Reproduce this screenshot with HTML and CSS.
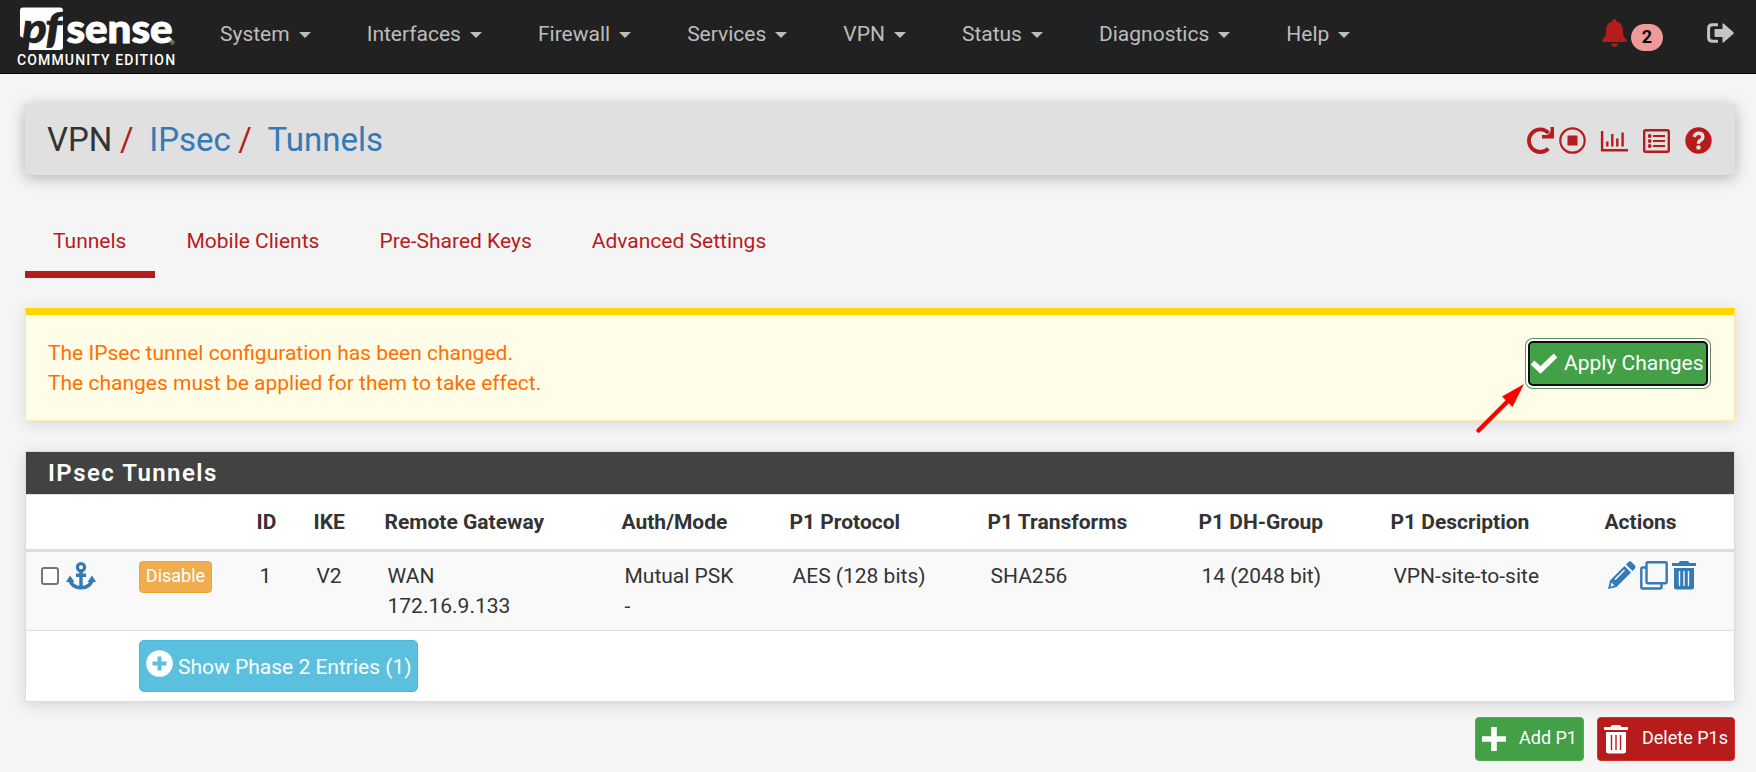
FILE: index.html
```html
<!DOCTYPE html>
<html lang="en">
<head>
<meta charset="utf-8">
<title>VPN: IPsec: Tunnels</title>
<link rel="stylesheet" href="styles.css">
</head>
<body>
<nav class="navbar">
  <a class="brand">
    <svg class="logo" width="160" height="46" viewBox="0 0 160 46">
      <path d="M8 2.500H45Q48 2.500 48 5.500V42Q48 45 45 45H10L13 36 5 31V5.500Q5 2.500 8 2.500Z" fill="#fff"/>
      <text x="7" y="38" class="logo-pf" textLength="25" lengthAdjust="spacingAndGlyphs">p</text>
      <text x="30" y="38" class="logo-pf" textLength="17" lengthAdjust="spacingAndGlyphs">f</text>
      <text x="51.500" y="37.500" class="logo-sense" textLength="106" lengthAdjust="spacingAndGlyphs">sense</text>
      <text x="155" y="40" class="logo-reg">®</text>
    </svg>
    <span class="edition">COMMUNITY EDITION</span>
  </a>
  <ul class="menu">
    <li>System<i class="caret"></i></li>
    <li>Interfaces<i class="caret"></i></li>
    <li>Firewall<i class="caret"></i></li>
    <li>Services<i class="caret"></i></li>
    <li>VPN<i class="caret"></i></li>
    <li>Status<i class="caret"></i></li>
    <li>Diagnostics<i class="caret"></i></li>
    <li>Help<i class="caret"></i></li>
  </ul>
  <div class="nav-right">
    <svg class="bell" width="25" height="28" viewBox="0 0 25 28"><path d="M12.500 0C11.300 0 10.600.8 10.600 1.900V2.600C6.600 3.500 4.200 6.600 4.200 10.500 4.200 15.500 3.200 18 .8 20.200.1 21 0 21.500.1 22.100.3 22.700.9 23 1.500 23H23.500C24.100 23 24.700 22.700 24.900 22.100 25 21.500 24.900 21 24.200 20.200 21.800 18 20.800 15.500 20.800 10.500 20.800 6.600 18.400 3.500 14.400 2.600V1.900C14.400.8 13.700 0 12.500 0ZM9 24.500C9.200 26.600 10.600 28 12.500 28S15.800 26.600 16 24.500Z" fill="#b71c1c"/></svg>
    <span class="badge">2</span>
    <svg class="signout" width="27" height="20" viewBox="0 0 27 20"><path d="M11 1.700H5.500Q1.600 1.700 1.600 5.500V14.500Q1.600 18.300 5.500 18.300H11" fill="none" stroke="#c4c4c4" stroke-width="3"/><path d="M15.500 1Q15.500 0 16.500.4L26.500 9.300Q27 10 26.500 10.700L16.500 19.600Q15.500 20 15.500 19V14H8.500Q7.500 14 7.500 13V7Q7.500 6 8.500 6H15.500Z" fill="#c4c4c4"/></svg>
  </div>
</nav>

<main class="container">
  <header class="page-header">
    <h1 class="crumbs"><span>VPN</span><b>/</b><a>IPsec</a><b>/</b><a>Tunnels</a></h1>
    <div class="header-icons">
      <svg class="i-redo" width="27" height="27" viewBox="0 0 27 27"><path d="M21.300 21.600A11.300 11.300 0 1 1 21.500 6" fill="none" stroke="#b71c1c" stroke-width="3.800"/><path d="M27 0V11.500H15V8H20.500L23.500 5V0Z" fill="#b71c1c"/></svg>
      <svg class="i-stop" width="27" height="27" viewBox="0 0 27 27"><circle cx="13.500" cy="13.500" r="12.200" fill="none" stroke="#b71c1c" stroke-width="2.200"/><rect x="8.500" y="8.500" width="10" height="10" rx=".5" fill="#b71c1c"/></svg>
      <svg class="i-chart" width="27" height="21" viewBox="0 0 27 21"><path d="M1.100 0V19.300H27M6.300 15.500V10.500M11.300 15.500V3M16.300 15.500V7.500M21.600 15.500V1.500" fill="none" stroke="#b71c1c" stroke-width="2.400"/></svg>
      <svg class="i-list" width="27" height="24" viewBox="0 0 27 24"><rect x="1.200" y="1.200" width="24.600" height="21.600" rx="1.500" fill="none" stroke="#b71c1c" stroke-width="2.400"/><path d="M10 7H22M10 12H22M10 17H22" stroke="#b71c1c" stroke-width="2.200"/><g fill="#b71c1c"><circle cx="6.700" cy="7" r="1.900"/><circle cx="6.700" cy="12" r="1.900"/><circle cx="6.700" cy="17" r="1.900"/></g></svg>
      <svg class="i-help" width="27" height="27" viewBox="0 0 27 27"><circle cx="13.500" cy="13.500" r="13.200" fill="#b71c1c"/><path d="M9 9.800Q10.500 6.300 13.700 6.300 17.800 6.300 17.800 10 17.800 12.200 15.500 13.300 13.500 14.300 13.500 16.800" fill="none" stroke="#e0e0e0" stroke-width="3.400"/><circle cx="13.500" cy="20.500" r="2.300" fill="#e0e0e0"/></svg>
    </div>
  </header>

  <ul class="tabs">
    <li class="active">Tunnels</li>
    <li>Mobile Clients</li>
    <li>Pre-Shared Keys</li>
    <li>Advanced Settings</li>
  </ul>

  <section class="alert">
    <p>The IPsec tunnel configuration has been changed.<br>The changes must be applied for them to take effect.</p>
    <button class="apply"><svg width="28" height="20" viewBox="0 0 28 20"><path d="M2.500 9.500 10.500 17 25.500 2.500" fill="none" stroke="#fff" stroke-width="5.400"/></svg>Apply Changes</button>
    <svg class="arrow" width="52" height="52" viewBox="0 0 52 52"><path d="M4.500 46.500 34 17" stroke="#f00" stroke-width="4.500" stroke-linecap="round"/><path d="M50 0 28 12.500 38.500 23Z" fill="#f00"/></svg>
  </section>

  <section class="panel">
    <h2>IPsec Tunnels</h2>
    <div class="row head">
      <span></span><span></span><span>ID</span><span>IKE</span><span>Remote Gateway</span><span>Auth/Mode</span><span>P1 Protocol</span><span>P1 Transforms</span><span>P1 DH-Group</span><span>P1 Description</span><span>Actions</span>
    </div>
    <div class="row entry">
      <span class="select"><i class="checkbox"></i>
        <svg width="30" height="28" viewBox="0 0 30 28"><g fill="none" stroke="#337ab7"><circle cx="15" cy="5.300" r="3.600" stroke-width="3.200"/><path d="M15 9V26M10 13.200H20" stroke-width="3.400"/><path d="M3.800 18Q6 25.800 15 25.800 24 25.800 26.200 18" stroke-width="3.600"/></g><path d="M4 13.500 8.500 20H0ZM26 13.500 30 20H21.500Z" fill="#337ab7"/></svg>
      </span>
      <span><button class="disable">Disable</button></span>
      <span>1</span><span>V2</span><span>WAN<br>172.16.9.133</span><span>Mutual PSK<br>-</span><span>AES (128 bits)</span><span>SHA256</span><span>14 (2048 bit)</span><span>VPN-site-to-site</span>
      <span class="actions">
        <svg width="28" height="28" viewBox="0 0 28 28"><path d="M16.500 5 23 11.500 8.500 26 0 28 2 19.500Z" fill="#337ab7"/><path d="M18 3.500 20.500 1Q22 -.3 23.500 1L27 4.500Q28.300 6 27 7.500L24.500 10Z" fill="#337ab7"/><path d="M7 18.500 16.500 9" stroke="#f9f9f9" stroke-width="1.600"/><path d="M3.500 21.500 6.500 24.500 2.500 25.800Z" fill="#f9f9f9"/></svg>
        <svg width="28" height="29" viewBox="0 0 28 29"><g fill="none" stroke="#337ab7" stroke-width="2.400"><rect x="6.500" y="1.300" width="20.200" height="21" rx="1.200"/><path d="M6 6.500H3Q1.300 6.500 1.300 8V26Q1.300 27.500 3 27.500H20Q21.500 27.500 21.500 26V23"/></g></svg>
        <svg width="24" height="29" viewBox="0 0 24 29"><path d="M0 2H6.500L8 0H16L17.500 2H24V5H0ZM2 7H22V26Q22 28.500 19.500 28.500H4.500Q2 28.500 2 26Z" fill="#337ab7"/><path d="M7.500 10V25M12 10V25M16.500 10V25" stroke="#f9f9f9" stroke-width="1.400"/></svg>
      </span>
    </div>
    <div class="phase2">
      <button class="show"><svg width="27" height="27" viewBox="0 0 27 27"><circle cx="13.500" cy="13.500" r="13.300" fill="#fff"/><path d="M13.500 6.500V20.500M6.500 13.500H20.500" stroke="#5bc0de" stroke-width="4"/></svg><span>Show Phase 2 Entries (1)</span></button>
    </div>
  </section>

  <div class="footer-actions">
    <button class="btn add"><svg width="24" height="24" viewBox="0 0 24 24"><path d="M12 0V24M0 12H24" stroke="#fff" stroke-width="5.600"/></svg><span>Add P1</span></button>
    <button class="btn delete"><svg width="24" height="29" viewBox="0 0 24 29"><path d="M0 2H6.500L8 0H16L17.500 2H24V5H0ZM2 7H22V26Q22 28.500 19.500 28.500H4.500Q2 28.500 2 26Z" fill="#fff"/><path d="M7.500 10V25M12 10V25M16.500 10V25" stroke="#b71c1c" stroke-width="1.400"/></svg><span>Delete P1s</span></button>
  </div>
</main>
</body>
</html>
```
FILE: styles.css
```css
* { box-sizing: border-box; }
body {
  margin: 0;
  height: 772px;
  overflow: hidden;
  background: #f5f5f5;
  color: #333;
  font: 21px/30px Roboto, "Liberation Sans", sans-serif;
}
button { font: inherit; line-height: normal; margin: 0; padding: 0; color: #fff; display: flex; align-items: center; }
svg { display: block; flex: none; overflow: visible; }
ul { list-style: none; margin: 0; padding: 0; display: flex; }

.navbar { height: 74px; display: flex; background: #212121; border-bottom: 1px solid #000; }
.brand { width: 204px; flex: none; padding: 5px 0 0 15px; }
.logo-pf { font: italic 900 42px Lato, sans-serif; fill: #212121; stroke: #212121; stroke-width: .6px; }
.logo-sense { font: 900 39px Lato, sans-serif; fill: #fff; stroke: #fff; stroke-width: 1px; }
.logo-reg { font: 6px Roboto, sans-serif; fill: #ccc; }
.edition { display: block; margin: 0 0 0 2px; color: #fff; font-size: 14px; line-height: 18px; letter-spacing: 1.15px; white-space: nowrap; font-weight: 500; }
.menu { color: #bdbdbd; padding-left: 16px; gap: 56px; line-height: 68px; }
.menu li { display: flex; align-items: center; height: 68px; white-space: nowrap; }
.caret { margin: 2px 0 0 9px; border: 6px solid transparent; border-top-color: #bdbdbd; border-bottom: 0; }
.nav-right { margin-left: auto; display: flex; padding-right: 22px; }
.bell { margin-top: 19px; }
.badge { margin: 24px 44px 0 4px; width: 32px; height: 27px; border-radius: 14px; background: #ef9a9a; color: #000; font-weight: 700; font-size: 18px; line-height: 26px; text-align: center; }
.signout { margin-top: 23px; }

.container { padding: 30px 21px 0 25px; }
.page-header { height: 71px; display: flex; justify-content: space-between; padding: 0 23px 0 22px; background: #e0e0e0; border-radius: 3px; box-shadow: 0 3px 15px rgba(0,0,0,.28); }
.crumbs { margin: 0; font-size: 33px; font-weight: 400; line-height: 72px; display: flex; white-space: pre; }
.crumbs b { font-weight: 400; color: #b71c1c; margin: 0 15.7px 0 7.5px; }
.crumbs a { color: #337ab7; }
.header-icons { display: flex; }
.i-redo, .i-stop, .i-help { margin-top: 23px; }
.i-stop { margin-left: 5px; }
.i-chart { margin: 27px 0 0 15px; }
.i-list { margin: 25px 15px 0; }

.tabs { margin-top: 33px; color: #b71c1c; gap: 3px; }
.tabs li { height: 70px; padding: 18px 28.5px 0; white-space: nowrap; }
.tabs .active { padding-left: 28px; border-bottom: 7px solid #b71c1c; }

.alert { position: relative; display: flex; justify-content: space-between; margin-top: 30px; height: 113px; padding: 23px 26px 0 22px; background: #fffde7; border: 1px solid #ffe9a8; border-top: 7px solid #ffd600; box-shadow: 0 3px 15px rgba(0,0,0,.12); color: #ff6f00; }
.alert p { margin: 0; }
.apply { width: 180px; height: 45px; margin-top: 3px; padding: 0 0 1px; border: 2.5px solid #101010; border-radius: 5px; background: #43a047; box-shadow: 0 0 0 2px #fff, 0 0 0 3px #5c8f5e; white-space: nowrap; gap: 6px; }
.arrow { position: absolute; left: 1448px; top: 69px; }

.panel { margin-top: 30px; height: 251px; background: #fff; border: 1px solid #ddd; box-shadow: 0 3px 15px rgba(0,0,0,.14); }
.panel h2 { margin: 0; height: 43px; padding-left: 22px; background: #424242; color: #fff; border-bottom: 1px solid #ddd; font-size: 24px; font-weight: 600; line-height: 43px; letter-spacing: 1.45px; }
.row { display: grid; grid-template-columns: 110px 117px 57px 71px 237px 168px 198px 211px 192px 214px 1fr; padding-left: 3.5px; white-space: nowrap; }
.head { height: 57px; padding-top: 12px; border-bottom: 3px solid #ddd; font-weight: 700; }
.entry { height: 79px; padding: 9px 0 0 6.5px; background: #f9f9f9; border-bottom: 1px solid #ddd; }
.select { display: flex; padding-left: 8.5px; gap: 7px; }
.select svg { margin-top: 1px; }
.checkbox { width: 18px; height: 18px; margin-top: 6px; background: #fff; border: 2px solid #767676; border-radius: 3px; }
.disable { width: 73px; height: 32px; margin-left: -3.5px; padding-bottom: 3px; justify-content: center; background: #f0ad4e; border: 1px solid #eea236; border-radius: 4px; font-size: 18px; }
.actions { display: flex; gap: 4px; }
.phase2 { padding: 9px 0 0 113px; }
.show { width: 279px; height: 52px; padding-left: 6px; gap: 5px; background: #5bc0de; border: 1px solid #46b8da; border-radius: 5px; white-space: nowrap; }
.show svg { margin-top: -5px; }
.show span { padding-top: 2px; }

.footer-actions { display: flex; justify-content: flex-end; gap: 13px; margin-top: 15px; }
.btn { height: 44px; border-radius: 4px; font-size: 18px; padding: 0 7px 0 6px; gap: 14px; white-space: nowrap; }
.btn span { padding-bottom: 3px; }
.add { width: 109px; gap: 13px; background: #43a047; border: 1px solid #4caf50; }
.delete { width: 138px; background: #b71c1c; border: 1px solid #d32f2f; }
```
